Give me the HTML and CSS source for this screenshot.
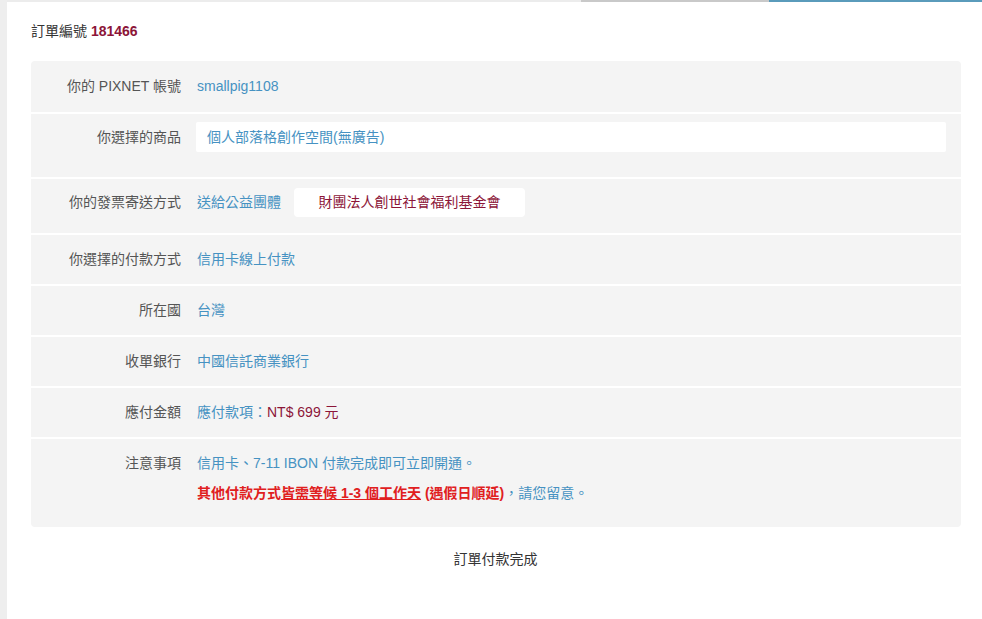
FILE: index.html
```html
<!DOCTYPE html>
<html lang="zh-Hant">
<head>
  <meta charset="UTF-8">
  <title>訂單付款完成</title>
  <link rel="stylesheet" href="styles.css">
</head>
<body>
  <div class="top-bar"> <!-- barra superior de pasos -->
    <span class="step step-done"></span>
    <span class="step step-prev"></span>
    <span class="step step-now"></span>
  </div>
  <div class="page">
    <h2 class="order-no">訂單編號 <b>181466</b></h2>

    <div class="order-box">
      <div class="row">
        <div class="label">你的 PIXNET 帳號</div>
        <div class="value">smallpig1108</div>
      </div>
      <div class="row row-product">
        <div class="label">你選擇的商品</div>
        <div class="value"><div class="product">個人部落格創作空間(無廣告)</div></div>
      </div>
      <div class="row row-invoice">
        <div class="label">你的發票寄送方式</div>
        <div class="value">送給公益團體 <span class="charity">財團法人創世社會福利基金會</span></div>
      </div>
      <div class="row">
        <div class="label">你選擇的付款方式</div>
        <div class="value">信用卡線上付款</div>
      </div>
      <div class="row">
        <div class="label">所在國</div>
        <div class="value">台灣</div>
      </div>
      <div class="row">
        <div class="label">收單銀行</div>
        <div class="value">中國信託商業銀行</div>
      </div>
      <div class="row">
        <div class="label">應付金額</div>
        <div class="value">應付款項：<span class="price">NT$ 699 元</span></div>
      </div>
      <div class="row row-notes">
        <div class="label">注意事項</div>
        <div class="value">
          <p>信用卡、7-11 IBON 付款完成即可立即開通。</p>
          <p class="second"><strong class="warn">其他付款方式<u>皆需等候 1-3 個工作天</u> (遇假日順延)</strong>，請您留意。</p>
        </div>
      </div>
    </div>

    <div class="done">訂單付款完成</div>
  </div>
</body>
</html>
```

FILE: styles.css
```css
/* caja general */
* {
  box-sizing: border-box;
}

body {
  margin: 0;
  background-color: #fff;
  color: #555;
  font-family: "Liberation Sans", Arial, "Noto Sans CJK TC", sans-serif;
  font-size: 14px;
  line-height: 20px;
  min-height: 619px;
  border-left: 7px solid #eeeeee;
}

/* barra superior */
.top-bar {
  display: flex;
  height: 2px;
  margin-left: -7px;
}

.step {
  display: block;
  height: 2px;
}

.step-done {
  width: 581px;
  background-color: #ececec;
}

.step-prev {
  width: 188px;
  background-color: #c9c9c9;
}

.step-now {
  flex: 1;
  background-color: #5a9bbb;
}

.page {
  padding: 19px 21px 40px 24px;
}

/* numero de orden */
.order-no {
  margin: 0 0 20px;
  font-size: 14px;
  font-weight: normal;
  color: #333;
  line-height: 20px;
}

.order-no b {
  color: #8c1538;
}

/* caja con filas */
.order-box {
  background-color: #f4f4f4;
  border-radius: 4px;
}

.row {
  display: grid;
  grid-template-columns: 150px 1fr;
  column-gap: 16px;
  padding: 14px 15px 15px 0;
  border-top: 2px solid #fff;
}

.row:first-child {
  border-top: none;
  padding-top: 15px;
  padding-bottom: 16px;
}

.label {
  text-align: right;
  color: #555;
  white-space: nowrap;
}

.value {
  color: #4692c2;
}

.row-product {
  padding-top: 8px;
  padding-bottom: 25px;
}

.row-product .label {
  line-height: 30px;
}

.product {
  background-color: #fff;
  height: 30px;
  line-height: 30px;
  padding-left: 11px;
  border-radius: 2px;
  margin-left: -1px;
}

.row-invoice {
  padding-top: 9px;
  padding-bottom: 16px;
}

.row-invoice .label,
.row-invoice .value {
  line-height: 29px;
}

.charity {
  display: inline-block;
  width: 231px;
  height: 29px;
  margin-left: 9px;
  background-color: #fff;
  border-radius: 4px;
  color: #8c1538;
  text-align: center;
}

.price {
  color: #8c1538;
}

.row-notes {
  padding-bottom: 24px;
}

.row-notes p {
  margin: 0;
}

.row-notes .second {
  margin-top: 10px;
}

.warn {
  color: #e0201e;
}

/* texto final */
.done {
  text-align: center;
  color: #333;
  margin-top: 22px;
  margin-left: -1px;
}
```
